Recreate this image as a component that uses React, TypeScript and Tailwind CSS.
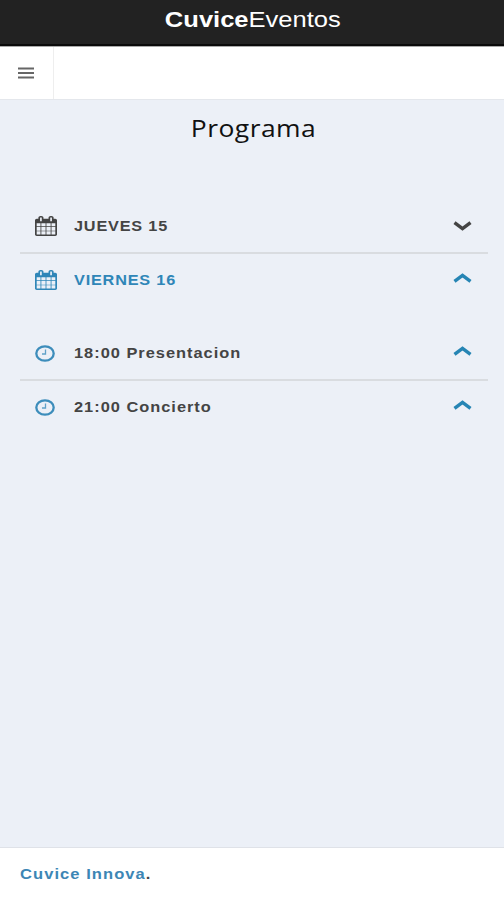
import { useState } from "react";

type Row = {
  id: string;
  label: string;
  icon: "calendar" | "clock";
  open: boolean;
  active?: boolean;
};

const days: Row[] = [
  { id: "jueves", label: "JUEVES 15", icon: "calendar", open: false },
  { id: "viernes", label: "VIERNES 16", icon: "calendar", open: true, active: true },
];

const events: Row[] = [
  { id: "presentacion", label: "18:00 Presentacion", icon: "clock", open: true },
  { id: "concierto", label: "21:00 Concierto", icon: "clock", open: true },
];

export default function App() {
  return (
    <div className="flex h-[900px] w-[504px] flex-col overflow-hidden bg-[#ecf0f7] font-['Liberation_Sans',Arial,sans-serif]">
      <header className="flex h-[47px] shrink-0 justify-center border-b border-[#aaa] bg-[#222] shadow-[inset_0_-2px_0_#0a0a0a]">
        <h1 className="mt-[5px] ml-0.5 origin-center scale-x-[1.16] whitespace-nowrap text-[22px] leading-[30px] text-white">
          <b>Cuvice</b>Eventos
        </h1>
      </header>

      <nav className="flex h-[53px] shrink-0 border-b border-[#e4e7ec] bg-white">
        <button
          type="button"
          aria-label="Menu"
          className="flex w-[54px] items-center justify-center border-r border-[#eee] pr-px"
        >
          <MenuIcon />
        </button>
      </nav>

      <main className="flex-1">
        <h2 className="mt-2.5 ml-1 flex h-9 justify-center text-[#111]">
          <span className="scale-x-[1.15] font-['Open_Sans',sans-serif] text-[23px] leading-9 tracking-[0.4px]">
            Programa
          </span>
        </h2>
        <div className="mr-4 ml-5 pt-[54px]">
          <Accordion rows={days} />
          <div className="mt-[21px]">
            <Accordion rows={events} />
          </div>
        </div>
      </main>

      <footer className="h-[53px] shrink-0 border-t border-[#dfe2e8] bg-white pl-5">
        <p className="mt-[15px] w-fit origin-left scale-x-[1.18] text-[14px] leading-[22px] font-bold tracking-[0.9px] whitespace-nowrap text-[#444]">
          <a className="text-[#3c86b5]">Cuvice Innova</a>.
        </p>
      </footer>
    </div>
  );
}

function Accordion({ rows }: { rows: Row[] }) {
  const [open, setOpen] = useState<Record<string, boolean>>(
    Object.fromEntries(rows.map((row) => [row.id, row.open])),
  );

  return (
    <ul>
      {rows.map((row) => (
        <li key={row.id} className="border-b-2 border-[#d9dce0] last:border-b-0">
          <button
            type="button"
            onClick={() => setOpen((prev) => ({ ...prev, [row.id]: !prev[row.id] }))}
            className={`flex h-[52px] w-full items-center pr-4 pl-[15px] text-left ${
              row.active ? "text-[#2f86b8]" : "text-[#444]"
            }`}
          >
            <span className="flex w-[39px] shrink-0">
              {row.icon === "calendar" ? <CalendarIcon /> : <ClockIcon />}
            </span>
            <span
              className={`origin-left text-[14px] font-bold whitespace-nowrap ${
                row.icon === "clock"
                  ? "scale-x-[1.17] tracking-[0.85px]"
                  : "scale-x-[1.16] tracking-[0.7px]"
              }`}
            >
              {row.label}
            </span>
            <Chevron up={open[row.id]} />
          </button>
        </li>
      ))}
    </ul>
  );
}

function MenuIcon() {
  return (
    <svg width="16" height="12" viewBox="0 0 16 12" fill="#666">
      <rect y="0.500" width="16" height="2" />
      <rect y="5" width="16" height="2" />
      <rect y="9.500" width="16" height="2" />
    </svg>
  );
}

function CalendarIcon() {
  return (
    <svg
      width="22"
      height="20"
      viewBox="0 0 1664 1792"
      preserveAspectRatio="none"
      fill="currentColor"
    >
      <path d="M128 1664h288v-288h-288v288zM480 1664h320v-288h-320v288zM128 1312h288v-320h-288v320zM480 1312h320v-320h-320v320zM128 928h288v-288h-288v288zM864 1664h320v-288h-320v288zM480 928h320v-288h-320v288zM1248 1664h288v-288h-288v288zM864 1312h320v-320h-320v320zM512 448v-288q0-13-9.500-22.500t-22.500-9.500h-64q-13 0-22.500 9.500t-9.500 22.500v288q0 13 9.500 22.500t22.500 9.500h64q13 0 22.500-9.500t9.500-22.500zM1248 1312h288v-320h-288v320zM864 928h320v-288h-320v288zM1248 928h288v-288h-288v288zM1280 448v-288q0-13-9.500-22.500t-22.500-9.500h-64q-13 0-22.500 9.500t-9.500 22.500v288q0 13 9.500 22.500t22.500 9.500h64q13 0 22.500-9.500t9.500-22.500zM1664 384v1280q0 52-38 90t-90 38h-1408q-52 0-90-38t-38-90v-1280q0-52 38-90t90-38h128v-96q0-66 47-113t113-47h64q66 0 113 47t47 113v96h384v-96q0-66 47-113t113-47h64q66 0 113 47t47 113v96h128q52 0 90 38t38 90z" />
    </svg>
  );
}

function ClockIcon() {
  return (
    <svg width="20" height="17" viewBox="0 0 20 17" fill="none" stroke="#3d8dbb">
      <ellipse cx="10" cy="8.500" rx="8.700" ry="7.200" strokeWidth="2.300" />
      <path d="M10.500 4.500v4.500H7" strokeWidth="1.300" opacity="0.8" />
    </svg>
  );
}

function Chevron({ up }: { up: boolean }) {
  return (
    <svg
      width="19"
      height="10"
      viewBox="0 0 19 10"
      fill="none"
      strokeWidth="3.400"
      className={`ml-auto shrink-0 ${
        up ? "-translate-y-[2px] stroke-[#2685b4]" : "stroke-[#444]"
      }`}
    >
      <path d={up ? "M1.500 8.300L9.500 2.300L17.500 8.300" : "M1.500 1.700L9.500 7.700L17.500 1.700"} />
    </svg>
  );
}
